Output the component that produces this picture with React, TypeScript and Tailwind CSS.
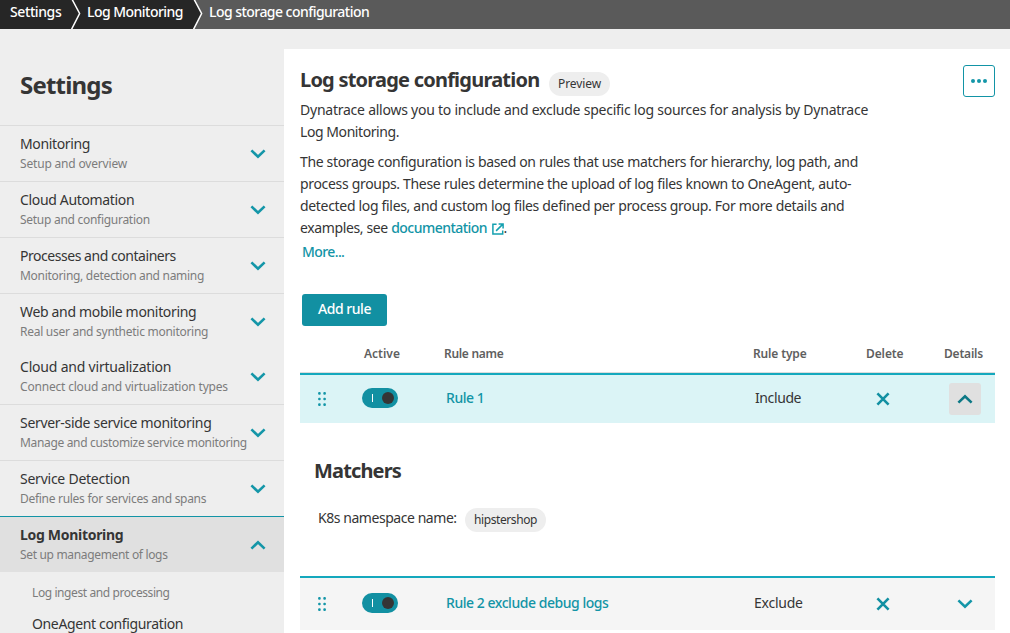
import React from "react";

function Chevron({ up = false, className = "" }: { up?: boolean; className?: string }) {
  return (
    <svg width="16" height="10" viewBox="0 0 16 10" fill="none" stroke="currentColor" strokeWidth="2.6" className={className}>
      <path d={up ? "M1.4 8.6 8 2.2l6.6 6.4" : "M1.4 1.4 8 7.8l6.6-6.4"} />
    </svg>
  );
}

function Arrow({ className }: { className: string }) {
  return (
    <svg width="10" height="29" viewBox="0 0 10 29" className={"block shrink-0 " + className}>
      <path d="M0 0H1.2L8.6 13.5 .2 29H0Z" fill="#262626" />
      <path d="M.9-1 8.6 13.5 .2 30" fill="none" stroke="#fff" strokeWidth="1.5" />
    </svg>
  );
}

type Item = { title: string; sub: string; tt: string; st: string; line?: boolean };

const items: Item[] = [
  { title: "Monitoring", sub: "Setup and overview", tt: "tracking-[-0.35px]", st: "tracking-[-0.18px]", line: true },
  { title: "Cloud Automation", sub: "Setup and configuration", tt: "tracking-[-0.34px]", st: "tracking-[-0.28px]", line: true },
  { title: "Processes and containers", sub: "Monitoring, detection and naming", tt: "tracking-[-0.46px]", st: "tracking-[-0.3px]", line: true },
  { title: "Web and mobile monitoring", sub: "Real user and synthetic monitoring", tt: "tracking-[-0.33px]", st: "tracking-[-0.27px]", line: true },
  { title: "Cloud and virtualization", sub: "Connect cloud and virtualization types", tt: "tracking-[-0.2px]", st: "tracking-[-0.19px]" },
  { title: "Server-side service monitoring", sub: "Manage and customize service monitoring", tt: "tracking-[-0.3px]", st: "tracking-[-0.33px]", line: true },
  { title: "Service Detection", sub: "Define rules for services and spans", tt: "tracking-[-0.24px]", st: "tracking-[-0.29px]", line: true },
];

function Sidebar() {
  return (
    <aside className="flex w-[284px] shrink-0 flex-col">
      <h1 className="h-24 shrink-0 pl-5 pt-10 text-2xl leading-8 font-bold tracking-[-0.8px]">Settings</h1>
      {items.map((i) => (
        <div
          key={i.title}
          className={"flex shrink-0 justify-between pl-5 pr-[18px] " + (i.line ? "h-14 border-t border-[#dcdcdc]" : "h-[55px]")}
        >
          <div className="whitespace-nowrap pt-2">
            <div className={"text-sm leading-5 " + i.tt}>{i.title}</div>
            <div className={"text-xs leading-5 text-[#7c7c7c] " + i.st}>{i.sub}</div>
          </div>
          <Chevron className="mt-[23px] -ml-4 shrink-0 text-[#1496a8]" />
        </div>
      ))}
      <div className="flex h-14 shrink-0 justify-between border-t border-[#1294a6] bg-[#e0e0e0] pl-5 pr-[18px]">
        <div className="whitespace-nowrap pt-2">
          <div className="text-sm leading-5 font-bold tracking-[-0.3px]">Log Monitoring</div>
          <div className="text-xs leading-5 tracking-[-0.33px] text-[#7c7c7c]">Set up management of logs</div>
        </div>
        <Chevron up className="mt-[23px] text-[#1496a8]" />
      </div>
      <div className="whitespace-nowrap pl-8 pt-[11px]">
        <div className="text-xs leading-5 tracking-[-0.41px] text-[#7c7c7c]">Log ingest and processing</div>
        <div className="mt-[11px] text-sm leading-5 tracking-[-0.36px]">OneAgent configuration</div>
      </div>
    </aside>
  );
}

function DragHandle() {
  return (
    <svg width="9" height="14" viewBox="0 0 9 14" fill="#1496a8">
      {[1.4, 7, 12.6].map((y) => (
        <g key={y}>
          <rect x=".1" y={y - 1.3} width="2.6" height="2.6" rx="1" />
          <rect x="5.3" y={y - 1.3} width="2.6" height="2.6" rx="1" />
        </g>
      ))}
    </svg>
  );
}

function Toggle() {
  return (
    <div className="flex h-5 w-9 items-center justify-between rounded-full bg-[#1290a2] pl-2.5 pr-1">
      <span className="h-2 w-px bg-white" />
      <span className="size-3 rounded-full bg-[#353535]" />
    </div>
  );
}

function Cross() {
  return (
    <svg width="14" height="14" viewBox="0 0 14 14" stroke="#1290a2" strokeWidth="2.6">
      <path d="M1.4 1.4 12.6 12.6M12.6 1.4 1.4 12.6" />
    </svg>
  );
}

const columns = "grid grid-cols-[62px_82px_309px_113px_77px_52px]";

function Rule({ name, type, open, nt, tt }: { name: string; type: string; open?: boolean; nt: string; tt: string }) {
  return (
    <div className={columns + " border-t-2 border-[#14a8bd] " + (open ? "h-[50px] bg-[#dbf4f6]" : "h-[54px] bg-[#f5f5f5] pt-[2px]")}>
      <div className="pl-[18px] pt-[17px]"><DragHandle /></div>
      <div className="pt-[13px]"><Toggle /></div>
      <div className={"pl-0.5 pt-[13px] text-sm leading-5 font-medium text-[#1294a6] " + nt}>{name}</div>
      <div className={"pt-[13px] text-sm leading-5 " + tt}>{type}</div>
      <div className="pl-[10px] pt-[17px]"><Cross /></div>
      {open ? (
        <div className="ml-[6px] mt-2 flex size-8 items-center justify-center rounded-[3px] bg-[#e0e0e0]">
          <Chevron up className="text-[#0c7885]" />
        </div>
      ) : (
        <div className="pl-[14px] pt-[19px]"><Chevron className="text-[#1496a8]" /></div>
      )}
    </div>
  );
}

function External() {
  return (
    <svg width="12" height="12" viewBox="0 0 12 12" fill="none" stroke="#14a0b0" strokeWidth="1.5" className="ml-[4.5px] inline-block align-[-1.5px]">
      <path d="M4.6 1.3H.9v9.8h9.8V7.4M4.1 7.9 10.6 1.4M6.6 .9h4.5v4.5" />
    </svg>
  );
}

export default function App() {
  return (
    <div className="h-[633px] w-[1010px] overflow-hidden bg-[#eeeeee] font-['Noto_Sans',sans-serif] text-[#353535]">
      <header className="flex h-[29px] bg-[#5a5a5a] text-sm leading-[24px] font-medium whitespace-nowrap text-white">
        <div className="w-[71px] bg-[#262626] pl-2.5 tracking-[-0.4px]">Settings</div>
        <Arrow className="bg-[#262626]" />
        <div className="w-[112px] bg-[#262626] pl-1.5 tracking-[-0.53px]">Log Monitoring</div>
        <Arrow className="bg-[#5a5a5a]" />
        <div className="pl-1.5 tracking-[-0.54px]">Log storage configuration</div>
      </header>
      <div className="flex h-[604px]">
        <Sidebar />
        <main className="mt-5 w-[726px] bg-white pl-4 pr-[15px]">
          <div className="flex h-[50px] justify-between">
            <div className="flex whitespace-nowrap">
              <h2 className="w-[249px] pt-[17px] text-xl leading-7 font-bold tracking-[-0.78px]">Log storage configuration</h2>
              <span className="mt-[23px] flex h-6 w-[61px] items-center justify-center rounded-full bg-[#eeeeee] text-xs tracking-[-0.1px]">Preview</span>
            </div>
            <button className="mt-4 flex size-8 items-center justify-center rounded-[3px] border border-[#1294a6]">
              <svg width="16" height="4" viewBox="0 0 16 4" fill="#1496a8">
                <circle cx="2" cy="2" r="2" />
                <circle cx="8" cy="2" r="2" />
                <circle cx="14" cy="2" r="2" />
              </svg>
            </button>
          </div>
          <p className="text-sm leading-[22px] whitespace-nowrap">
            <span className="block tracking-[-0.24px]">Dynatrace allows you to include and exclude specific log sources for analysis by Dynatrace</span>
            <span className="block tracking-[-0.43px]">Log Monitoring.</span>
          </p>
          <p className="mt-2 text-sm leading-[22px] whitespace-nowrap">
            <span className="block tracking-[-0.345px]">The storage configuration is based on rules that use matchers for hierarchy, log path, and</span>
            <span className="block tracking-[-0.32px]">process groups. These rules determine the upload of log files known to OneAgent, auto-</span>
            <span className="block tracking-[-0.32px]">detected log files, and custom log files defined per process group. For more details and</span>
            <span className="block tracking-[-0.37px]">examples, see <a className="font-medium tracking-[-0.53px] text-[#1294a6]">documentation<External /></a>.</span>
          </p>
          <div className="mt-0.5 pl-0.5 text-sm leading-[22px] font-medium tracking-[-0.6px] text-[#1294a6]">More...</div>
          <button className="mt-[31px] ml-0.5 flex h-8 w-[85px] justify-center rounded-[3px] bg-[#1290a2] pt-[5px] text-sm leading-5 font-medium tracking-[-0.45px] text-white">Add rule</button>
          <div className={columns + " h-[47px] border-b border-[#dcdcdc] pt-[18px] text-xs leading-5 font-semibold text-[#5f5f5f]"}>
            <span />
            <span className="pl-0.5">Active</span>
            <span className="tracking-[-0.3px]">Rule name</span>
            <span className="tracking-[-0.15px]">Rule type</span>
            <span className="tracking-[-0.1px]">Delete</span>
            <span className="pl-px tracking-[-0.2px]">Details</span>
          </div>
          <Rule name="Rule 1" type="Include" open nt="tracking-[-0.45px]" tt="pl-0.5 tracking-[-0.4px]" />
          <section className="h-[153px] pl-[14px] pt-[34px]">
            <h3 className="text-xl leading-7 font-bold tracking-[-0.85px]">Matchers</h3>
            <div className="mt-[23px] flex pl-1">
              <span className="w-[147px] text-sm leading-5 tracking-[-0.45px]">K8s namespace name:</span>
              <span className="flex h-6 w-[81px] items-center justify-center rounded-full bg-[#eeeeee] text-xs tracking-[-0.4px]">hipstershop</span>
            </div>
          </section>
          <Rule name="Rule 2 exclude debug logs" type="Exclude" nt="tracking-[-0.46px]" tt="pl-px tracking-[-0.25px]" />
        </main>
      </div>
    </div>
  );
}
